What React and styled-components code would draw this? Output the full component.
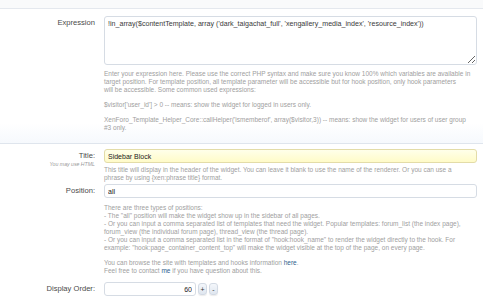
import styled, { createGlobalStyle } from 'styled-components';

const GlobalStyle = createGlobalStyle`
  html, body {
    margin: 0;
    padding: 0;
    background: #ffffff;
  }
  body {
    font-family: "Liberation Sans", Arial, sans-serif;
  }
`;

const Page = styled.div`
  width: 483px;
  height: 300px;
  overflow: hidden;
  background: #ffffff;
`;

const TopStrip = styled.div`
  height: 8px;
  background: #f9fafb;
  border-bottom: 1px solid #e4e8ee;
`;

const Section = styled.div`
  padding: ${({ $pt }) => $pt}px 6px ${({ $pb }) => $pb}px 0;
  border-bottom: ${({ $last }) => ($last ? 'none' : '1px solid #dfe5ed')};
  background: ${({ $tint }) => ($tint ? 'linear-gradient(#ffffff 85%, #f6f9fd)' : '#ffffff')};
`;

const Row = styled.div`
  display: grid;
  grid-template-columns: 104px 1fr;
  margin-bottom: ${({ $mb }) => $mb || 0}px;
`;

const LabelCell = styled.div`
  text-align: right;
  padding-right: 9px;
`;

const Label = styled.div`
  font-size: 7.6px;
  line-height: 14px;
  color: #4a4a4a;
`;

const Hint = styled.div`
  font-size: 5.2px;
  line-height: 5px;
  font-style: italic;
  color: #9a9a9a;
  margin-top: -1px;
`;

const Control = styled.div`
  min-width: 0;
`;

const TextArea = styled.textarea`
  display: block;
  box-sizing: border-box;
  width: 373px;
  height: 49px;
  margin: 0;
  padding: 3px 3px;
  border: 1px solid #d6dce4;
  border-radius: 3px;
  background: #ffffff;
  font-family: "Liberation Sans", Arial, sans-serif;
  font-size: 7.1px;
  line-height: 8px;
  color: #3a3a3a;
  outline: none;
`;

const Input = styled.input`
  display: block;
  box-sizing: border-box;
  width: ${({ $w }) => $w || 373}px;
  height: 14px;
  margin: 0;
  padding: 0 3px;
  border: 1px solid ${({ $focus }) => ($focus ? '#e3dca8' : '#d6dce4')};
  border-radius: 3px;
  background: ${({ $focus }) => ($focus ? 'linear-gradient(#ffffea, #fffbc8)' : '#ffffff')};
  font-family: "Liberation Sans", Arial, sans-serif;
  font-size: 7px;
  color: #222222;
  text-align: ${({ $right }) => ($right ? 'right' : 'left')};
  outline: none;
`;

const Explain = styled.div`
  margin-top: ${({ $mt }) => $mt}px;
  font-size: 6.5px;
  line-height: 8px;
  color: #a0a0a0;
`;

const Para = styled.p`
  margin: 0 0 7px 0;
  &:last-child {
    margin-bottom: 0;
  }
`;

const Link = styled.a`
  color: #2b5d8c;
  text-decoration: none;
`;

const Spinner = styled.div`
  display: flex;
  align-items: center;
  gap: 2px;
`;

const SpinButton = styled.button`
  width: 9px;
  height: 12px;
  margin: 0;
  padding: 0;
  border: 1px solid #d3dae4;
  border-radius: 3px;
  background: linear-gradient(#f4f7fb, #dfe6ef);
  font-family: "Liberation Sans", Arial, sans-serif;
  font-size: 7px;
  line-height: 9px;
  color: #333333;
  box-shadow: 0 1px 1px rgba(0, 0, 0, 0.08);
`;

export default function App() {
  return (
    <Page>
      <GlobalStyle />
      <TopStrip />
      <Section $pt={7} $pb={11} $tint>
        <Row>
          <LabelCell>
            <Label>Expression</Label>
          </LabelCell>
          <Control>
            <TextArea
              readOnly
              defaultValue={"!in_array($contentTemplate, array ('dark_taigachat_full', 'xengallery_media_index', 'resource_index'))"}
            />
            <Explain $mt={5}>
              <Para>
                Enter your expression here. Please use the correct PHP syntax and make sure you know 100% which variables are available in
                <br />
                target position. For template position, all template parameter will be accessible but for hook position, only hook parameters
                <br />
                will be accessible. Some common used expressions:
              </Para>
              <Para>$visitor['user_id'] &gt; 0 -- means: show the widget for logged in users only.</Para>
              <Para>
                XenForo_Template_Helper_Core::callHelper('ismemberof', array($visitor,3)) -- means: show the widget for users of user group
                <br />
                #3 only.
              </Para>
            </Explain>
          </Control>
        </Row>
      </Section>
      <Section $pt={5} $pb={0} $last>
        <Row $mb={2}>
          <LabelCell>
            <Label>Title:</Label>
            <Hint>You may use HTML</Hint>
          </LabelCell>
          <Control>
            <Input $focus readOnly defaultValue="Sidebar Block" />
            <Explain $mt={3}>
              This title will display in the header of the widget. You can leave it blank to use the name of the renderer. Or you can use a
              <br />
              phrase by using {'{xen:phrase title}'} format.
            </Explain>
          </Control>
        </Row>
        <Row $mb={7}>
          <LabelCell>
            <Label>Position:</Label>
          </LabelCell>
          <Control>
            <Input readOnly defaultValue="all" />
            <Explain $mt={6}>
              <Para>
                There are three types of positions:
                <br />- The "all" position will make the widget show up in the sidebar of all pages.
                <br />- Or you can input a comma separated list of templates that need the widget. Popular templates: forum_list (the index page),
                <br />
                forum_view (the individual forum page), thread_view (the thread page).
                <br />- Or you can input a comma separated list in the format of "hook:hook_name" to render the widget directly to the hook. For
                <br />
                example: "hook:page_container_content_top" will make the widget visible at the top of the page, on every page.
              </Para>
              <Para>
                You can browse the site with templates and hooks information <Link>here</Link>.
                <br />
                Feel free to contact <Link>me</Link> if you have question about this.
              </Para>
            </Explain>
          </Control>
        </Row>
        <Row>
          <LabelCell>
            <Label>Display Order:</Label>
          </LabelCell>
          <Control>
            <Spinner>
              <Input $w={92} $right readOnly defaultValue="60" />
              <SpinButton>+</SpinButton>
              <SpinButton>-</SpinButton>
            </Spinner>
          </Control>
        </Row>
      </Section>
    </Page>
  );
}
